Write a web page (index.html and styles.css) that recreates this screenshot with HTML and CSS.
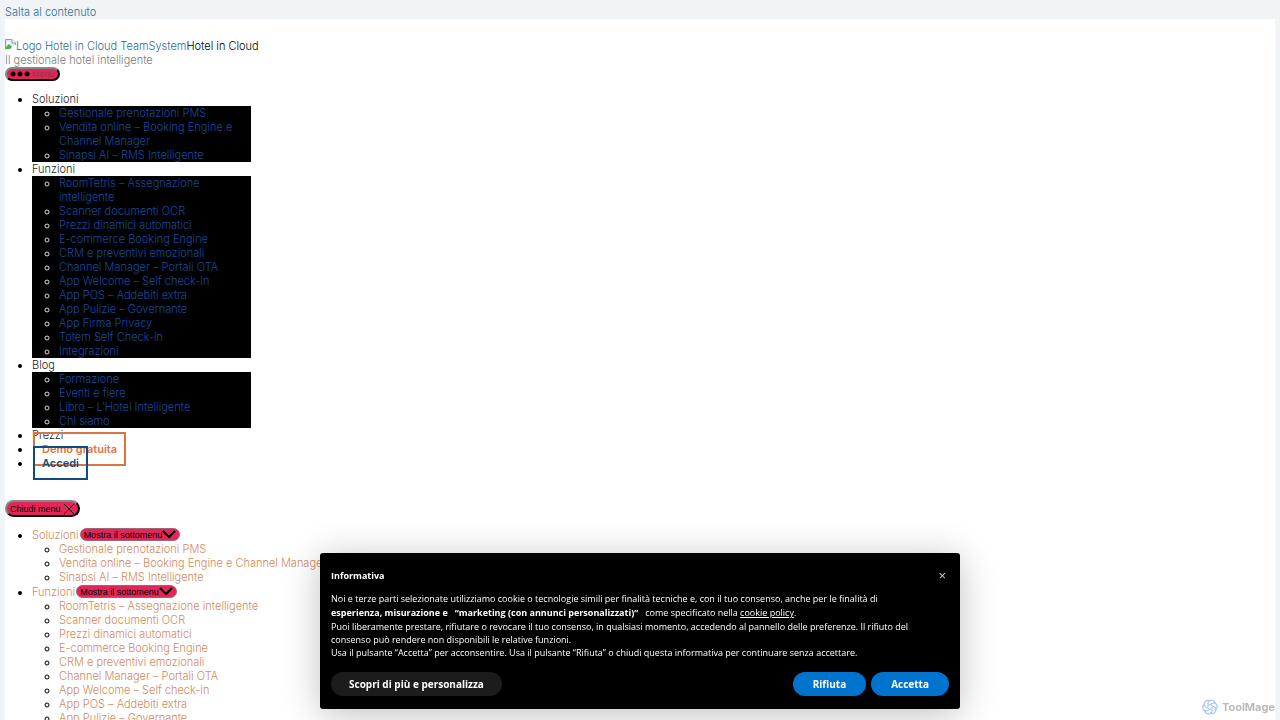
FILE: index.html
```html
<!DOCTYPE html>
<html lang="it">
<head>
  <meta charset="UTF-8">
  <meta name="viewport" content="width=device-width, initial-scale=1.0">
  <title>Hotel in Cloud</title>
  <link rel="stylesheet" href="styles.css">
</head>
<body>

  <a class="skip-link" href="#site-content">Salta al contenuto</a>

  <div class="page" id="site-content">
    <header class="site-header">
      <div class="site-logo">
        <a href="#"><svg class="logo-image" viewBox="0 0 11 11" aria-hidden="true"><path d="M.5 10.500V.5H7l3.500 3.500v2" fill="#dce9f7" stroke="#9a9a9a"/><path d="M7 .5V4h3.500" fill="#fff" stroke="#9a9a9a"/><path d="M1 10V8l3-3 3 3-2 2z" fill="#4caf50"/><path d="M2 4h3" stroke="#fff" stroke-width="2"/><path d="M5 11l6-5v5z" fill="#fff"/></svg>Logo Hotel in Cloud TeamSystem</a><span>Hotel in Cloud</span>
      </div>
      <div class="site-description">Il gestionale hotel intelligente</div>
      <button class="nav-toggle"><svg viewBox="0 0 20 6" aria-hidden="true"><circle cx="3" cy="3" r="2.500"/><circle cx="10" cy="3" r="2.500"/><circle cx="17" cy="3" r="2.500"/></svg><span>Menu</span></button>

      <nav class="primary-menu" aria-label="Orizzontale">
        <ul>
          <li><a href="#">Soluzioni</a>
            <ul class="sub-menu">
              <li><a href="#">Gestionale prenotazioni PMS</a></li>
              <li><a href="#">Vendita online – Booking Engine e Channel Manager</a></li>
              <li><a href="#">Sinapsi AI – RMS Intelligente</a></li>
            </ul>
          </li>
          <li><a href="#">Funzioni</a>
            <ul class="sub-menu">
              <li><a href="#">RoomTetris – Assegnazione intelligente</a></li>
              <li><a href="#">Scanner documenti OCR</a></li>
              <li><a href="#">Prezzi dinamici automatici</a></li>
              <li><a href="#">E-commerce Booking Engine</a></li>
              <li><a href="#">CRM e preventivi emozionali</a></li>
              <li><a href="#">Channel Manager – Portali OTA</a></li>
              <li><a href="#">App Welcome – Self check-in</a></li>
              <li><a href="#">App POS – Addebiti extra</a></li>
              <li><a href="#">App Pulizie – Governante</a></li>
              <li><a href="#">App Firma Privacy</a></li>
              <li><a href="#">Totem Self Check-in</a></li>
              <li><a href="#">Integrazioni</a></li>
            </ul>
          </li>
          <li><a href="#">Blog</a>
            <ul class="sub-menu">
              <li><a href="#">Formazione</a></li>
              <li><a href="#">Eventi e fiere</a></li>
              <li><a href="#">Libro – L’Hotel Intelligente</a></li>
              <li><a href="#">Chi siamo</a></li>
            </ul>
          </li>
          <li><a href="#">Prezzi</a></li>
          <li><a class="menu-button demo" href="#">Demo gratuita</a></li>
          <li><a class="menu-button login" href="#">Accedi</a></li>
        </ul>
      </nav>
    </header>

    <div class="menu-modal">
      <button class="close-nav"><span>Chiudi menu</span><svg viewBox="0 0 12 12" aria-hidden="true"><path d="M1 1l10 10M11 1L1 11"/></svg></button>

      <nav class="mobile-menu" aria-label="Mobile">
        <ul>
          <li>
            <div class="menu-row"><a href="#">Soluzioni</a><button class="sub-toggle"><span>Mostra il sottomenu</span><svg viewBox="0 0 14 9" aria-hidden="true"><path d="M1 1l6 6 6-6"/></svg></button></div>
            <ul>
              <li><a href="#">Gestionale prenotazioni PMS</a></li>
              <li><a href="#">Vendita online – Booking Engine e Channel Manager</a></li>
              <li><a href="#">Sinapsi AI – RMS Intelligente</a></li>
            </ul>
          </li>
          <li>
            <div class="menu-row"><a href="#">Funzioni</a><button class="sub-toggle"><span>Mostra il sottomenu</span><svg viewBox="0 0 14 9" aria-hidden="true"><path d="M1 1l6 6 6-6"/></svg></button></div>
            <ul>
              <li><a href="#">RoomTetris – Assegnazione intelligente</a></li>
              <li><a href="#">Scanner documenti OCR</a></li>
              <li><a href="#">Prezzi dinamici automatici</a></li>
              <li><a href="#">E-commerce Booking Engine</a></li>
              <li><a href="#">CRM e preventivi emozionali</a></li>
              <li><a href="#">Channel Manager – Portali OTA</a></li>
              <li><a href="#">App Welcome – Self check-in</a></li>
              <li><a href="#">App POS – Addebiti extra</a></li>
              <li><a href="#">App Pulizie – Governante</a></li>
            </ul>
          </li>
        </ul>
      </nav>
    </div>
  </div>

  <div class="cookie-banner" role="dialog" aria-labelledby="cookie-title">
    <div class="cookie-head">
      <strong id="cookie-title">Informativa</strong>
      <button class="cookie-close" aria-label="Chiudi">×</button>
    </div>
    <div class="cookie-text">
      Noi e terze parti selezionate utilizziamo cookie o tecnologie simili per finalità tecniche e, con il tuo consenso, anche per le finalità di <b>esperienza, misurazione e &nbsp;&nbsp;“marketing (con annunci personalizzati)”&nbsp;&nbsp;</b> come specificato nella <a href="#">cookie policy</a>.<br>
      Puoi liberamente prestare, rifiutare o revocare il tuo consenso, in qualsiasi momento, accedendo al pannello delle preferenze. Il rifiuto del consenso può rendere non disponibili le relative funzioni.<br>
      Usa il pulsante “Accetta” per acconsentire. Usa il pulsante “Rifiuta” o chiudi questa informativa per continuare senza accettare.
    </div>
    <div class="cookie-actions">
      <button class="customize">Scopri di più e personalizza</button>
      <button class="reject">Rifiuta</button>
      <button class="accept">Accetta</button>
    </div>
  </div>

  <div class="badge">
    <svg viewBox="0 0 16 16" aria-hidden="true">
      <g fill="none" stroke="#a9c3f5" stroke-width="1.200">
        <path id="petal" d="M6 8V4c0-4 7-4 7 1"/>
        <use href="#petal" transform="rotate(60 8 8)"/>
        <use href="#petal" transform="rotate(120 8 8)"/>
        <use href="#petal" transform="rotate(180 8 8)"/>
        <use href="#petal" transform="rotate(240 8 8)"/>
        <use href="#petal" transform="rotate(300 8 8)"/>
      </g>
    </svg>
    <span>ToolMage</span>
  </div>

</body>
</html>
```
FILE: styles.css
```css
body {
  margin: 5px;
  background: #f0f4f7;
  color: #000;
  font-family: Inter, "Liberation Sans", sans-serif;
  font-size: 11px;
  font-weight: 300;
  line-height: 14px;
}

a {
  color: #2f6c98;
  text-decoration: none;
}

button {
  font-family: "Liberation Sans", sans-serif;
  cursor: pointer;
}

.skip-link {
  display: block;
}

.page {
  background: #fff;
}

.site-header {
  padding: 20px 0 30px;
}

.logo-image {
  width: 11px;
  height: 11px;
}

.site-logo {
  height: 14px;
}

.site-description {
  color: #7c7c7c;
}

.nav-toggle,
.close-nav {
  display: flex;
  align-items: center;
  gap: 2px;
  background: #e22658;
  border: 2px outset #333;
  border-radius: 9px;
}

.nav-toggle {
  height: 14px;
  padding: 0 3px;
  font-size: 9px;
  color: #8e3650;
}

.nav-toggle svg {
  width: 20px;
  height: 6px;
}

/* menus */
ul {
  margin: 0;
  padding-left: 27px;
}

.primary-menu {
  margin-top: 11px;
  max-width: 246px;
}

.primary-menu a {
  color: #222;
}

.primary-menu .sub-menu {
  background: #000;
  color: #ddd;
}

.primary-menu .sub-menu a {
  color: #174a9c;
}

.primary-menu .menu-button {
  margin-left: 1px;
  padding: 8px 7px;
  border: 2px solid;
  font-weight: 600;
}

.primary-menu .demo {
  color: #db7444;
}

.primary-menu .login {
  color: #0f4c81;
}

.close-nav {
  height: 17px;
  padding: 0 3px;
  font-size: 9px;
}

.close-nav svg {
  width: 12px;
  height: 12px;
  stroke: #000;
}

.mobile-menu {
  margin-top: 10px;
}

.mobile-menu a {
  color: #d18a62;
}

.menu-row {
  display: flex;
  align-items: center;
  height: 15px;
}

.sub-toggle {
  display: flex;
  align-items: center;
  height: 13px;
  margin-left: 1px;
  padding: 0 3px;
  background: #e22658;
  border: 1px solid #9a6678;
  border-radius: 7px;
  font-size: 9px;
}

.sub-toggle svg {
  width: 14px;
  height: 9px;
  fill: none;
  stroke: #000;
  stroke-width: 2;
}

/* cookie banner */
.cookie-banner {
  position: fixed;
  bottom: 11px;
  left: 50%;
  box-sizing: border-box;
  width: 50%;
  padding: 16px 11px 13px;
  transform: translateX(-50%);
  background: #000;
  border-radius: 3px;
  box-shadow: 0 5px 36px rgba(0, 0, 0, 0.25);
  color: #fff;
  font-family: "Open Sans", "Noto Sans", sans-serif;
  font-size: 9px;
  font-weight: 400;
  line-height: 13px;
}

.cookie-head {
  display: flex;
  align-items: center;
  justify-content: space-between;
  margin-bottom: 10px;
}

.cookie-close {
  padding: 0 3px;
  background: none;
  border: 0;
  color: #ccc;
  font-size: 13px;
  line-height: 13px;
}

.cookie-text {
  padding-right: 30px;
}

.cookie-text b {
  line-height: 15px;
}

.cookie-text a {
  color: #fff;
  text-decoration: underline;
}

.cookie-actions {
  display: flex;
  gap: 5px;
  margin-top: 13px;
}

.cookie-actions button {
  height: 24px;
  padding: 0 20px;
  border: 0;
  border-radius: 12px;
  background: #0073ce;
  color: #fff;
  font-family: inherit;
  font-size: 10px;
  font-weight: 700;
}

.cookie-actions .customize {
  margin-right: auto;
  padding: 0 18px;
  background: #1c1c1c;
}

.badge {
  position: fixed;
  right: 5px;
  bottom: 5px;
  display: flex;
  align-items: center;
  gap: 4px;
  color: #b9b9b9;
  font-size: 11px;
  font-weight: 700;
  line-height: 16px;
}

.badge svg {
  width: 16px;
  height: 16px;
}
```
